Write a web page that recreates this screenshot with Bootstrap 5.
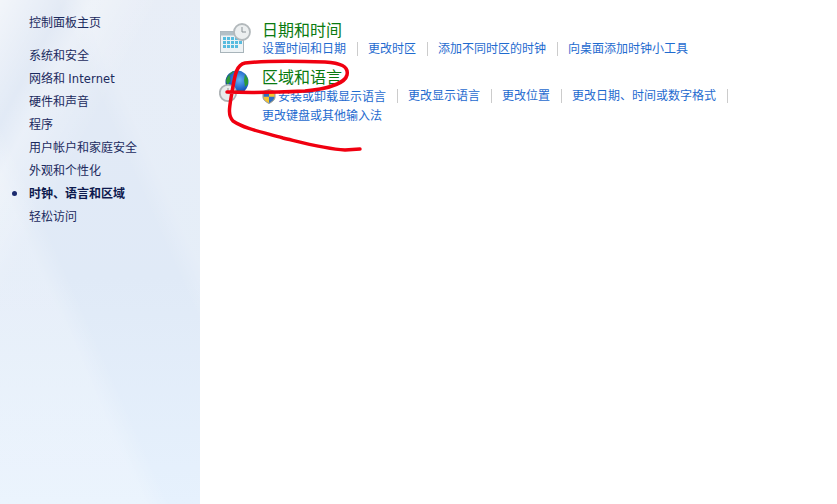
<!DOCTYPE html>
<html lang="zh"><head><meta charset="utf-8"><title>时钟、语言和区域</title>
<link href="https://cdn.jsdelivr.net/npm/bootstrap@5.3.0/dist/css/bootstrap.min.css" rel="stylesheet">
<style>
html,body{height:100%;margin:0;overflow:hidden}
body{width:837px;height:504px;background:#fff;font-family:"Liberation Sans","Noto Sans CJK SC",sans-serif;font-size:12px;line-height:16px;position:relative}
.side{width:200px;height:504px;flex:none;padding:15px 0 0 29px;background:linear-gradient(66deg,rgba(255,255,255,.22) 0,rgba(255,255,255,.22) 34%,rgba(255,255,255,0) 40%,rgba(255,255,255,0) 66%,rgba(255,255,255,.18) 72%),linear-gradient(118deg,rgba(255,255,255,.55) 0,rgba(255,255,255,0) 14%,rgba(255,255,255,.3) 20%,rgba(255,255,255,0) 34%),linear-gradient(180deg,#e3eaf5 0,#e0eaf7 55%,#e6f1fd 100%);color:#1b2a5e}
.side-home{margin-bottom:16px}
.side-item{height:23px;line-height:16px;position:relative;padding-top:1px}
.latin{font-family:"DejaVu Sans",sans-serif;font-size:11.5px;letter-spacing:.1px}
.side-item.cur{font-weight:700;color:#0e1a4e}
.side-item.cur::before{content:"";position:absolute;left:-17px;top:6px;width:5px;height:5px;border-radius:50%;background:#1b2a6e}
.main{padding:20px 0 0 19px;flex:1}
.grp{display:flex;gap:9px}
.grp-ico{width:34px;flex:none}
.ttl{font-size:16px;line-height:21px;color:#0a7a10}
.lnks{display:flex;flex-wrap:wrap;color:#1f6bcf;line-height:16px;width:490px}
.lnk{padding-right:11px;margin-right:10px;border-right:1px solid #ccc;height:14px;line-height:14px;margin-top:1px;margin-bottom:5px;white-space:nowrap}
.lnk:last-child{border-right:0}
.lnk-s{display:inline-block;vertical-align:-3px;margin-right:2px}
.grp2{margin-top:6px}
.ink{position:absolute;left:0;top:0;pointer-events:none}
</style></head><body>
<div class="d-flex">
<nav class="side">
<div class="side-home">控制面板主页</div>
<div class="side-item">系统和安全</div>
<div class="side-item">网络和 <span class="latin">Internet</span></div>
<div class="side-item">硬件和声音</div>
<div class="side-item">程序</div>
<div class="side-item">用户帐户和家庭安全</div>
<div class="side-item">外观和个性化</div>
<div class="side-item cur">时钟、语言和区域</div>
<div class="side-item">轻松访问</div>
</nav>
<main class="main">
<section class="grp">
<div class="grp-ico">
<svg width="34" height="34" viewBox="0 0 34 34"><rect x="1.500" y="11.500" width="23" height="21" fill="#eef3f5" stroke="#a8b4ba"/><rect x="1.500" y="11.500" width="23" height="4" fill="#b3c0c7"/><g fill="#58bcdf"><rect x="4" y="17" width="3" height="3"/><rect x="8" y="17" width="3" height="3"/><rect x="12" y="17" width="3" height="3"/><rect x="16" y="17" width="3" height="3"/><rect x="20" y="17" width="3" height="3"/><rect x="4" y="21" width="3" height="3"/><rect x="8" y="21" width="3" height="3"/><rect x="12" y="21" width="3" height="3"/><rect x="16" y="21" width="3" height="3"/><rect x="20" y="21" width="3" height="3"/><rect x="4" y="25" width="3" height="3"/><rect x="8" y="25" width="3" height="3"/><rect x="12" y="25" width="3" height="3"/><rect x="16" y="25" width="3" height="3"/></g><circle cx="23" cy="12" r="8" fill="#eceff0" stroke="#b3b9bc" stroke-width="1.800"/><path d="M23 7v5h4" fill="none" stroke="#8a9297"/></svg>
</div>
<div>
<div class="ttl">日期和时间</div>
<div class="lnks"><span class="lnk">设置时间和日期</span><span class="lnk">更改时区</span><span class="lnk">添加不同时区的时钟</span><span class="lnk">向桌面添加时钟小工具</span></div>
</div>
</section>
<section class="grp grp2">
<div class="grp-ico">
<svg width="34" height="40" viewBox="0 0 34 40"><defs><radialGradient id="gl" cx=".6" cy=".4" r=".6"><stop offset="0" stop-color="#62b4f6"/><stop offset=".7" stop-color="#1f62c4"/><stop offset="1" stop-color="#0d3f9a"/></radialGradient></defs><circle cx="18" cy="15" r="11.500" fill="url(#gl)"/><path d="M7.500 12c2-4 5-8 8-8-2 2-3 3-5 4l1 6-3 4c-1-2-2-4-1-6zM26 7l3 5 0 5-3 3-1-7z" fill="#2c9a35"/><path d="M12 23l12 1-4 3h-6z" fill="#1f7f2e"/><circle cx="9" cy="26" r="8.200" fill="#e9ecec" stroke="#aeb3b6" stroke-width="1.800"/><path d="M9 21v5h4" fill="none" stroke="#8a9297"/></svg>
</div>
<div>
<div class="ttl">区域和语言</div>
<div class="lnks"><span class="lnk"><svg class="lnk-s" width="14" height="15" viewBox="0 0 14 15"><path d="M7 .5l6 2v5.500c0 3-3 5-6 6.500-3-1.500-6-3.500-6-6.500V2.500z" fill="#f4c430" stroke="#8d97a5"/><path d="M7 1.200v6.500H1.700V3zM7 7.700h5.300v.5c0 2.700-2.800 4.500-5.300 5.700z" fill="#2f6fc4"/></svg>安装或卸载显示语言</span><span class="lnk">更改显示语言</span><span class="lnk">更改位置</span><span class="lnk">更改日期、时间或数字格式</span><span class="lnk">更改键盘或其他输入法</span></div>
</div>
</section>
</main>
</div>
<svg class="ink" width="837" height="504" viewBox="0 0 837 504"><path d="M227 92C250 93 285 92 305 91C325 89 345 84 347 75C349 66 340 63 325 62C300 61 262 61 245 63C236 65 235 75 232 92C230 105 227 115 233 121C245 129 262 132 283 138C300 142 325 149 345 150L360 149" fill="none" stroke="#f00010" stroke-width="3.500" stroke-linecap="round" stroke-linejoin="round"/></svg>
</body></html>
